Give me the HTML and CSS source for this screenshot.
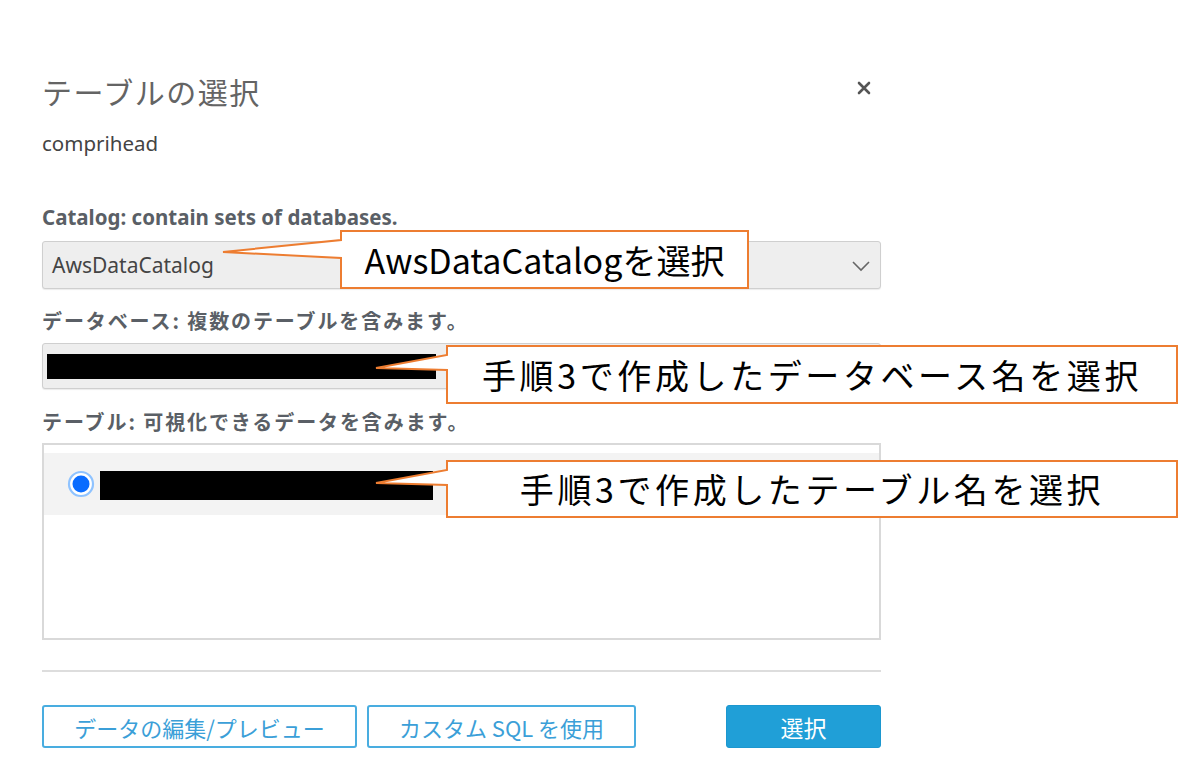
FILE: index.html
```html
<!DOCTYPE html>
<html lang="ja">
<head>
<meta charset="utf-8">
<title>テーブルの選択</title>
<link rel="stylesheet" href="styles.css">
</head>
<body>
<div class="page">
  <div class="dialog">
    <div class="header">
      <h1 class="title">テーブルの選択</h1>
      <span class="close" aria-label="close">
        <svg width="14" height="14" viewBox="0 0 14 14"><path d="M2 2 L12 12 M12 2 L2 12" stroke="#555" stroke-width="2.6" stroke-linecap="round" fill="none"/></svg>
      </span>
    </div>
    <div class="source">comprihead</div>

    <div class="label label-en">Catalog: contain sets of databases.</div>
    <div class="select">
      <span class="select-text">AwsDataCatalog</span>
      <svg class="chevron" width="20" height="12" viewBox="0 0 20 12"><path d="M2 2 L10 10 L18 2" stroke="#666" stroke-width="1.6" fill="none"/></svg>
    </div>

    <div class="label">データベース: 複数のテーブルを含みます。</div>
    <div class="select select-db">
      <span class="redact redact-db"></span>
    </div>

    <div class="label label-table">テーブル: 可視化できるデータを含みます。</div>
    <div class="list">
      <div class="row">
        <svg class="radio" width="28" height="28" viewBox="0 0 28 28"><circle cx="14" cy="14" r="12" fill="#fff" stroke="#8fc3ff" stroke-width="2.2"/><circle cx="14" cy="14" r="8.5" fill="#0a6cff"/></svg>
        <span class="redact redact-table"></span>
      </div>
    </div>

    <div class="divider"></div>

    <div class="actions">
      <div class="left-buttons">
        <button class="btn btn-outline btn-edit">データの編集/プレビュー</button>
        <button class="btn btn-outline btn-sql">カスタム SQL を使用</button>
      </div>
      <button class="btn btn-primary">選択</button>
    </div>
  </div>

  <svg class="callout-lines" width="1179" height="765" viewBox="0 0 1179 765">
    <path d="M341 231 H748 V288 H341 V258 L223 252 L341 240 Z" fill="#fff" stroke="#ED7D31" stroke-width="2"/>
    <path d="M447 346 H1177 V403 H447 V370 L376 368 L447 355 Z" fill="#fff" stroke="#ED7D31" stroke-width="2"/>
    <path d="M447 461 H1177 V517 H447 V485 L376 483 L447 470 Z" fill="#fff" stroke="#ED7D31" stroke-width="2"/>
  </svg>
  <div class="callout callout-1">AwsDataCatalogを選択</div>
  <div class="callout callout-2">手順3で作成したデータベース名を選択</div>
  <div class="callout callout-3">手順3で作成したテーブル名を選択</div>
</div>
</body>
</html>
```

FILE: styles.css
```css
* { box-sizing: border-box; }
html, body {
  margin: 0;
  padding: 0;
  background: #ffffff;
}
body {
  font-family: "Noto Sans", "Noto Sans CJK JP", sans-serif;
  color: #444;
}
.page {
  position: relative;
  width: 1179px;
  height: 765px;
  overflow: hidden;
}
.dialog {
  width: 881px;
  padding: 71px 0 0 42px;
}
.header {
  display: flex;
  justify-content: space-between;
  align-items: center;
  padding-right: 10px;
}
.title {
  margin: 0;
  font-family: "Noto Sans CJK JP", sans-serif;
  font-weight: 400;
  font-size: 30px;
  line-height: 40px;
  letter-spacing: 1.5px;
  color: #646464;
}
.close {
  display: flex;
  margin-top: -6px;
}
.source {
  margin-top: 20px;
  font-size: 20.5px;
  line-height: 24px;
  color: #444;
}
.label {
  margin-top: 21px;
  font-family: "Noto Sans CJK JP", sans-serif;
  font-weight: 700;
  font-size: 20px;
  line-height: 22px;
  letter-spacing: 1.9px;
  color: #5a5f66;
}
.label-en {
  margin-top: 51px;
  font-family: "Noto Sans", sans-serif;
  font-size: 20.5px;
  letter-spacing: 0;
}
.label-table {
  margin-top: 22px;
  letter-spacing: 1.9px;
}
.select {
  margin-top: 13px;
  height: 48px;
  background: #eeeeee;
  border: 1px solid #cfcfcf;
  border-radius: 3px;
  display: flex;
  align-items: center;
  justify-content: space-between;
  padding: 0 9px 0 9px;
  box-shadow: 0 1px 1px rgba(0,0,0,0.08);
}
.select-text {
  font-size: 21px;
  color: #444;
}
.chevron {
  margin-top: 2px;
}
.select-db {
  margin-top: 11px;
  height: 46px;
  padding: 0 4px;
}
.redact {
  display: block;
  background: #000;
}
.redact-db {
  width: 389px;
  height: 25px;
}
.list {
  margin-top: 10px;
  height: 197px;
  border: 2px solid #d9d9d9;
  padding: 8px 0 0 0;
}
.row {
  height: 62px;
  background: #f3f3f3;
  display: flex;
  align-items: center;
  padding-left: 23px;
  gap: 5px;
}
.redact-table {
  width: 333px;
  height: 29px;
  margin-top: 2px;
}
.divider {
  margin-top: 30px;
  height: 2px;
  background: #dddddd;
}
.actions {
  margin-top: 33px;
  display: flex;
  justify-content: space-between;
  align-items: center;
}
.left-buttons {
  display: flex;
  gap: 10px;
}
.btn {
  height: 43px;
  border-radius: 3px;
  font-family: "Noto Sans CJK JP", sans-serif;
  font-size: 22px;
  padding: 0;
  display: flex;
  align-items: center;
  justify-content: center;
}
.btn-outline {
  background: #fff;
  border: 2px solid #49ade0;
  color: #3b9fd8;
}
.btn-edit { width: 315px; }
.btn-sql { width: 269px; }
.btn-primary {
  width: 155px;
  background: #209fd7;
  border: 1px solid #1c97cf;
  color: #fff;
  font-size: 23px;
}
.callout-lines {
  position: absolute;
  left: 0;
  top: 0;
}
.callout {
  position: absolute;
  display: flex;
  align-items: center;
  justify-content: center;
  font-family: "Noto Sans CJK JP", sans-serif;
  color: #000;
  font-size: 34px;
  line-height: 40px;
}
.callout-1 {
  left: 342px;
  top: 232px;
  width: 405px;
  height: 55px;
}
.callout-2 {
  left: 448px;
  top: 347px;
  width: 728px;
  height: 55px;
  letter-spacing: 3.6px;
}
.callout-3 {
  left: 448px;
  top: 462px;
  width: 728px;
  height: 54px;
  letter-spacing: 3.6px;
}
```
